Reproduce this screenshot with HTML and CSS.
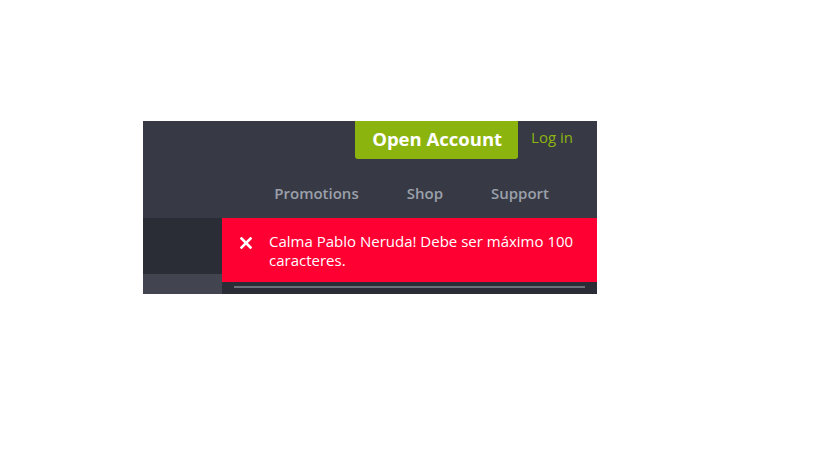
FILE: index.html
```html
<!DOCTYPE html>
<html lang="es">
<head>
  <meta charset="UTF-8" />
  <meta name="viewport" content="width=device-width, initial-scale=1.0"/>
  <title>Header</title>
  <link rel="stylesheet" href="styles.css">
</head>
<body>
  <div class="site">
    <div class="header">
      <div class="top-bar">
        <a class="open-account" href="#">Open Account</a>
        <a class="login" href="#">Log in</a>
      </div>
      <nav class="main-nav">
        <a href="#">Promotions</a>
        <a href="#">Shop</a>
        <a href="#">Support</a>
      </nav>
    </div>
    <div class="content">
      <div class="sidebar">
        <div class="sidebar-top"></div>
        <div class="sidebar-bottom"></div>
      </div>
      <div class="main">
        <div class="toast">
          <svg class="toast-close" width="12" height="12" viewBox="0 0 12 12">
            <path d="M1.5 1.5 L10.5 10.5 M10.5 1.5 L1.5 10.5" stroke="#fff" stroke-width="2.6" stroke-linecap="square"/>
          </svg>
          <span class="toast-text">Calma Pablo Neruda! Debe ser máximo 100 caracteres.</span>
        </div>
        <div class="main-body">
          <div class="divider"></div>
        </div>
      </div>
    </div>
  </div>
</body>
</html>
```

FILE: styles.css
```css
* {
  margin: 0;
  padding: 0;
  box-sizing: border-box;
}

body {
  font-family: 'Open Sans', sans-serif;
  background: #ffffff;
}

a {
  text-decoration: none;
}

.site {
  width: 454px;
  margin: 121px 0 0 143px;
  background: #373a45;
}

/* Header */
.header {
  height: 97px;
  display: flex;
  flex-direction: column;
}

.top-bar {
  display: flex;
  justify-content: flex-end;
  align-items: flex-start;
  height: 38px;
}

.open-account {
  height: 38px;
  display: flex;
  align-items: center;
  padding: 0 16px 4px 17px;
  background: #8cb40f;
  color: #ffffff;
  font-size: 18.5px;
  font-weight: 700;
  border-radius: 0 0 3px 3px;
}

.login {
  height: 32px;
  display: flex;
  align-items: center;
  padding: 0 24px 0 13px;
  color: #8cb40f;
  font-size: 15px;
}

.main-nav {
  display: flex;
  justify-content: flex-end;
  gap: 48px;
  padding: 24px 48px 0 0;
}

.main-nav a {
  color: #9ba0aa;
  font-size: 15px;
  font-weight: 600;
}

/* Content */
.content {
  display: flex;
  height: 76px;
}

.sidebar {
  width: 79px;
  display: flex;
  flex-direction: column;
}

.sidebar-top {
  height: 56px;
  background: #2a2d35;
}

.sidebar-bottom {
  flex: 1;
  background: #42454f;
}

.main {
  flex: 1;
  display: flex;
  flex-direction: column;
  background: #2a2d35;
}

.toast {
  height: 64px;
  display: flex;
  align-items: flex-start;
  padding: 14px 16px 0 18px;
  background: #ff0033;
  color: #ffffff;
}

.toast-close {
  flex: none;
  margin: 5px 17px 0 0;
}

.toast-text {
  font-size: 15px;
  line-height: 19px;
}

.main-body {
  flex: 1;
  padding: 4px 12px 0;
}

.divider {
  height: 2px;
  background: #6c707b;
}
```
